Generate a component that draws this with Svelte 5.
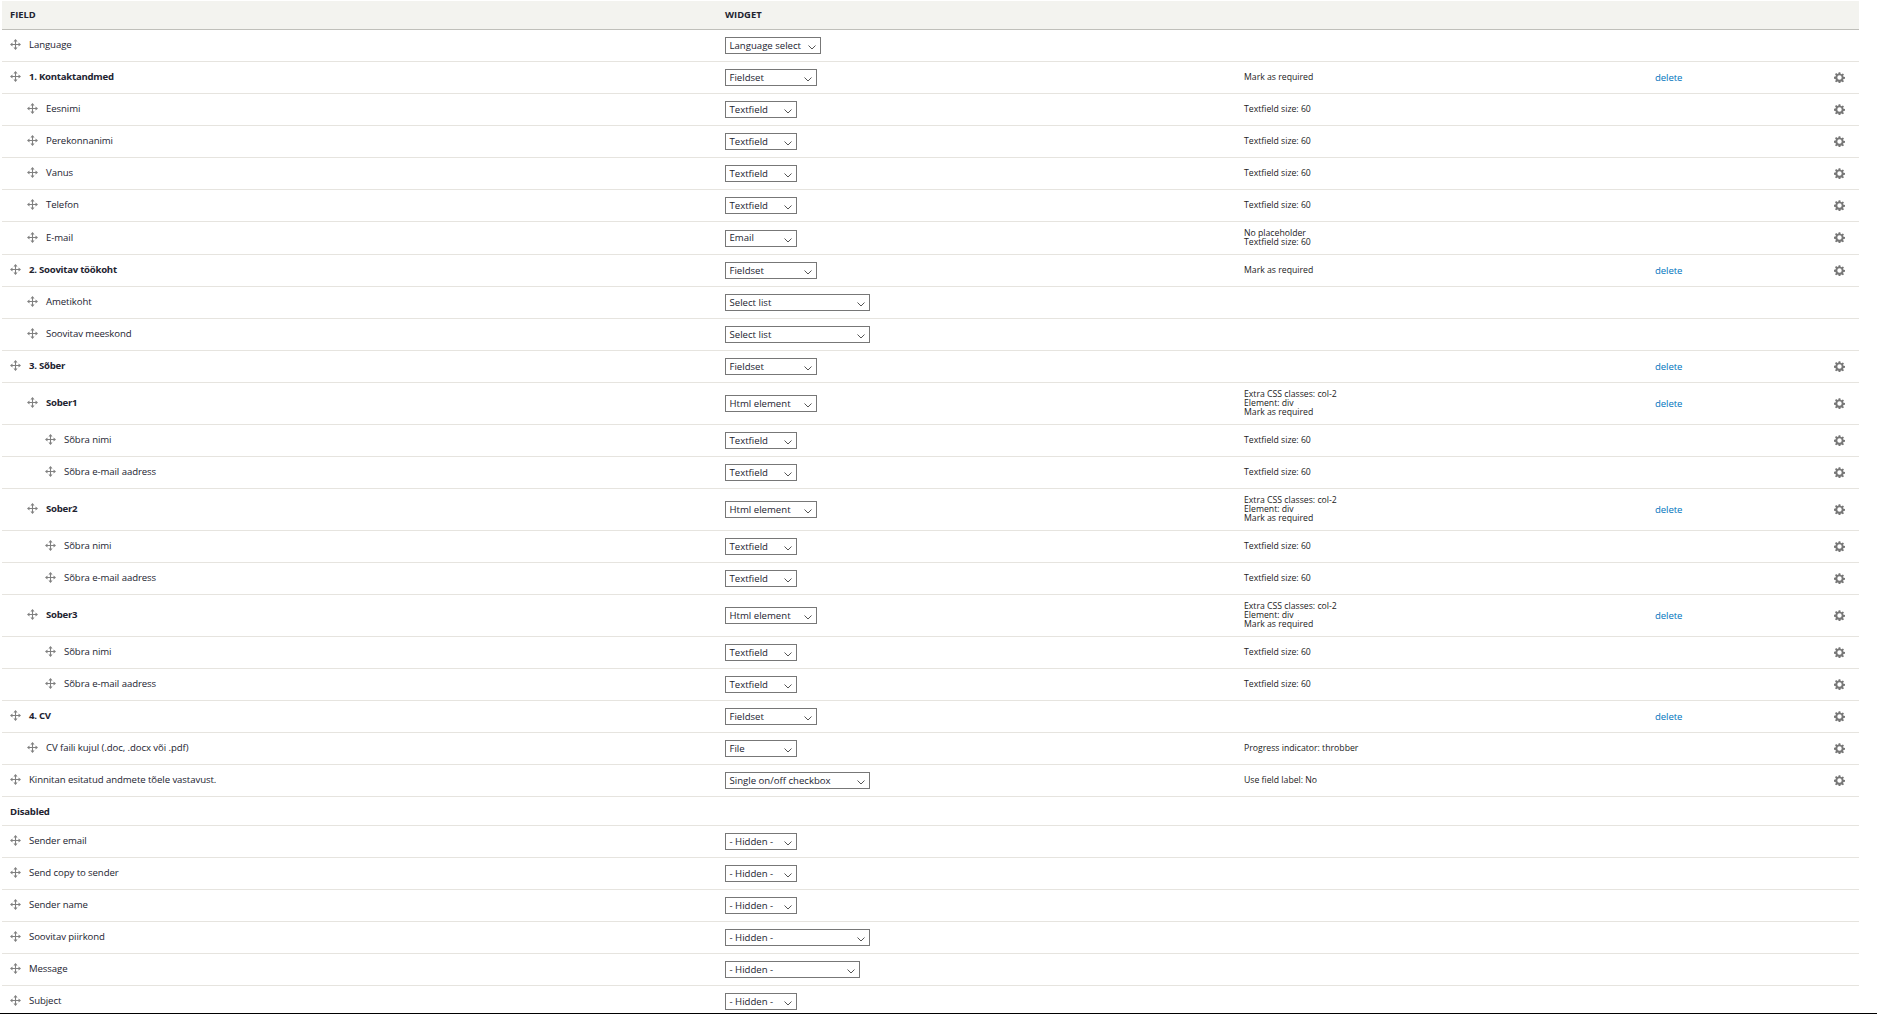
<script>
  const rows = [
    { label: 'Language', widget: 'Language select', w: 96 },
    { label: '1. Kontaktandmed', bold: true, widget: 'Fieldset', w: 92, summary: ['Mark as required'], del: true, gear: true },
    { label: 'Eesnimi', level: 1, widget: 'Textfield', w: 72, summary: ['Textfield size: 60'], gear: true },
    { label: 'Perekonnanimi', level: 1, widget: 'Textfield', w: 72, summary: ['Textfield size: 60'], gear: true },
    { label: 'Vanus', level: 1, widget: 'Textfield', w: 72, summary: ['Textfield size: 60'], gear: true },
    { label: 'Telefon', level: 1, widget: 'Textfield', w: 72, summary: ['Textfield size: 60'], gear: true },
    { label: 'E-mail', level: 1, widget: 'Email', w: 72, summary: ['No placeholder', 'Textfield size: 60'], gear: true },
    { label: '2. Soovitav töökoht', bold: true, widget: 'Fieldset', w: 92, summary: ['Mark as required'], del: true, gear: true },
    { label: 'Ametikoht', level: 1, widget: 'Select list', w: 145 },
    { label: 'Soovitav meeskond', level: 1, widget: 'Select list', w: 145 },
    { label: '3. Sõber', bold: true, widget: 'Fieldset', w: 92, del: true, gear: true },
    { label: 'Sober1', level: 1, bold: true, widget: 'Html element', w: 92, summary: ['Extra CSS classes: col-2', 'Element: div', 'Mark as required'], del: true, gear: true },
    { label: 'Sõbra nimi', level: 2, widget: 'Textfield', w: 72, summary: ['Textfield size: 60'], gear: true },
    { label: 'Sõbra e-mail aadress', level: 2, widget: 'Textfield', w: 72, summary: ['Textfield size: 60'], gear: true },
    { label: 'Sober2', level: 1, bold: true, widget: 'Html element', w: 92, summary: ['Extra CSS classes: col-2', 'Element: div', 'Mark as required'], del: true, gear: true },
    { label: 'Sõbra nimi', level: 2, widget: 'Textfield', w: 72, summary: ['Textfield size: 60'], gear: true },
    { label: 'Sõbra e-mail aadress', level: 2, widget: 'Textfield', w: 72, summary: ['Textfield size: 60'], gear: true },
    { label: 'Sober3', level: 1, bold: true, widget: 'Html element', w: 92, summary: ['Extra CSS classes: col-2', 'Element: div', 'Mark as required'], del: true, gear: true },
    { label: 'Sõbra nimi', level: 2, widget: 'Textfield', w: 72, summary: ['Textfield size: 60'], gear: true },
    { label: 'Sõbra e-mail aadress', level: 2, widget: 'Textfield', w: 72, summary: ['Textfield size: 60'], gear: true },
    { label: '4. CV', bold: true, widget: 'Fieldset', w: 92, del: true, gear: true },
    { label: 'CV faili kujul (.doc, .docx või .pdf)', level: 1, widget: 'File', w: 72, summary: ['Progress indicator: throbber'], gear: true },
    { label: 'Kinnitan esitatud andmete tõele vastavust.', widget: 'Single on/off checkbox', w: 145, summary: ['Use field label: No'], gear: true },
    { region: 'Disabled' },
    { label: 'Sender email', widget: '- Hidden -', w: 72 },
    { label: 'Send copy to sender', widget: '- Hidden -', w: 72 },
    { label: 'Sender name', widget: '- Hidden -', w: 72 },
    { label: 'Soovitav piirkond', widget: '- Hidden -', w: 145 },
    { label: 'Message', widget: '- Hidden -', w: 135 },
    { label: 'Subject', widget: '- Hidden -', w: 72 }
  ];
</script>

<table class="fields">
  <colgroup>
    <col class="c-field" />
    <col class="c-widget" />
    <col class="c-summary" />
    <col class="c-ops" />
    <col class="c-gear" />
  </colgroup>
  <thead>
    <tr>
      <th><span>FIELD</span></th>
      <th class="widget-head"><span>WIDGET</span></th>
      <th></th>
      <th></th>
      <th></th>
    </tr>
  </thead>
  <tbody>
    {#each rows as row}
      {#if row.region}
        <tr class="region">
          <td colspan="5">{row.region}</td>
        </tr>
      {:else}
        <tr class:tall={row.summary && row.summary.length === 3} class:double={row.summary && row.summary.length === 2}>
          <td>
            <div class="label level-{row.level || 0}" class:bold={row.bold}>
              <svg class="move" width="11" height="11" viewBox="0 0 16 16">
                <path d="M8 0 11 3.6H8.8V7.2H12.4V5L16 8 12.4 11V8.8H8.8V12.4H11L8 16 5 12.4H7.2V8.8H3.6V11L0 8 3.6 5V7.2H7.2V3.6H5z" fill="#808080" />
              </svg>
              <span>{row.label}</span>
            </div>
          </td>
          <td>
            <span class="select" style="width: {row.w}px">
              <span class="value">{row.widget}</span>
              <svg class="chevron" width="8" height="5" viewBox="0 0 8 5">
                <path d="M0.5 0.5 4 4 7.5 0.5" fill="none" stroke="#555" stroke-width="1" />
              </svg>
            </span>
          </td>
          <td class="summary">
            {#if row.summary}
              {#each row.summary as line}
                <div>{line}</div>
              {/each}
            {/if}
          </td>
          <td>
            {#if row.del}<a href="#delete" class="delete">delete</a>{/if}
          </td>
          <td class="gear-cell">
            {#if row.gear}
              <svg class="gear" width="11" height="11" viewBox="0 0 16 16">
                <path fill="#777" fill-rule="evenodd" d="M6.8 0.5h2.4l.4 2.2 1.4.6 1.9-1.3 1.6 1.6-1.3 1.9.6 1.4 2.2.4v2.4l-2.2.4-.6 1.4 1.3 1.9-1.6 1.6-1.9-1.3-1.4.6-.4 2.2H6.8l-.4-2.2-1.4-.6-1.9 1.3-1.6-1.6 1.3-1.9-.6-1.4-2.2-.4V6.8l2.2-.4.6-1.4-1.3-1.9 1.6-1.6 1.9 1.3 1.4-.6zM8 4.8a3.2 3.2 0 1 0 0 6.4 3.2 3.2 0 0 0 0-6.4z" />
              </svg>
            {/if}
          </td>
        </tr>
      {/if}
    {/each}
  </tbody>
</table>
<div class="page-edge"></div>

<style>
  :global(body) {
    margin: 0;
    background: #fff;
    overflow: hidden;
    height: 1014px;
  }

  .fields {
    border-collapse: separate;
    border-spacing: 0;
    table-layout: fixed;
    width: 1857px;
    margin: 1px 0 0 2px;
    font-family: "Open Sans", "Noto Sans", sans-serif;
    font-size: 9.6px;
    letter-spacing: -0.08px;
    color: #222330;
  }

  .c-field { width: 715px; }
  .c-widget { width: 519px; }
  .c-summary { width: 411px; }
  .c-ops { width: 162px; }

  th {
    box-sizing: border-box;
    height: 29px;
    padding: 0 0 0 8px;
    text-align: left;
    font-size: 9.4px;
    font-weight: 700;
    letter-spacing: 0;
    background: #f3f3ef;
    border-bottom: 1px solid #bfbfba;
  }

  th span {
    position: relative;
    top: -1px;
  }

  th.widget-head, td:nth-child(2) { padding-left: 8px; }

  td {
    box-sizing: border-box;
    height: 32px;
    padding: 0;
    border-bottom: 1px solid #e6e4df;
    vertical-align: middle;
  }

  tr.double td { height: 33px; }
  tr.tall td { height: 42px; }

  .region td {
    height: 29px;
    padding-left: 8px;
    font-weight: 700;
    letter-spacing: -0.2px;
  }

  .label {
    display: flex;
    align-items: center;
    gap: 8px;
    padding-bottom: 2px;
  }

  .level-0 { padding-left: 8px; }
  .level-1 { padding-left: 25px; }
  .level-2 { padding-left: 43px; }

  .bold {
    font-weight: 700;
    letter-spacing: -0.25px;
  }

  .move { flex: none; }

  .select {
    display: flex;
    align-items: center;
    justify-content: space-between;
    box-sizing: border-box;
    height: 17px;
    padding: 0 4px 0 3.5px;
    border: 1px solid #777;
    background: #fff;
    font-size: 9.6px;
    letter-spacing: 0;
    overflow: hidden;
    white-space: nowrap;
  }

  .value {
    position: relative;
    top: -0.5px;
  }

  .chevron {
    flex: none;
    margin-top: 4px;
  }

  .summary {
    padding-left: 8px;
    padding-bottom: 1px;
    font-size: 8.7px;
    letter-spacing: 0;
    line-height: 9px;
    color: #222;
  }

  .delete {
    padding-left: 8px;
    color: #0074bd;
    text-decoration: none;
  }

  .gear-cell {
    padding-left: 25px;
    padding-bottom: 1px;
  }

  .gear {
    display: block;
  }

  .page-edge {
    position: fixed;
    left: 0;
    right: 0;
    top: 1013px;
    height: 1px;
    background: #000;
  }
</style>
